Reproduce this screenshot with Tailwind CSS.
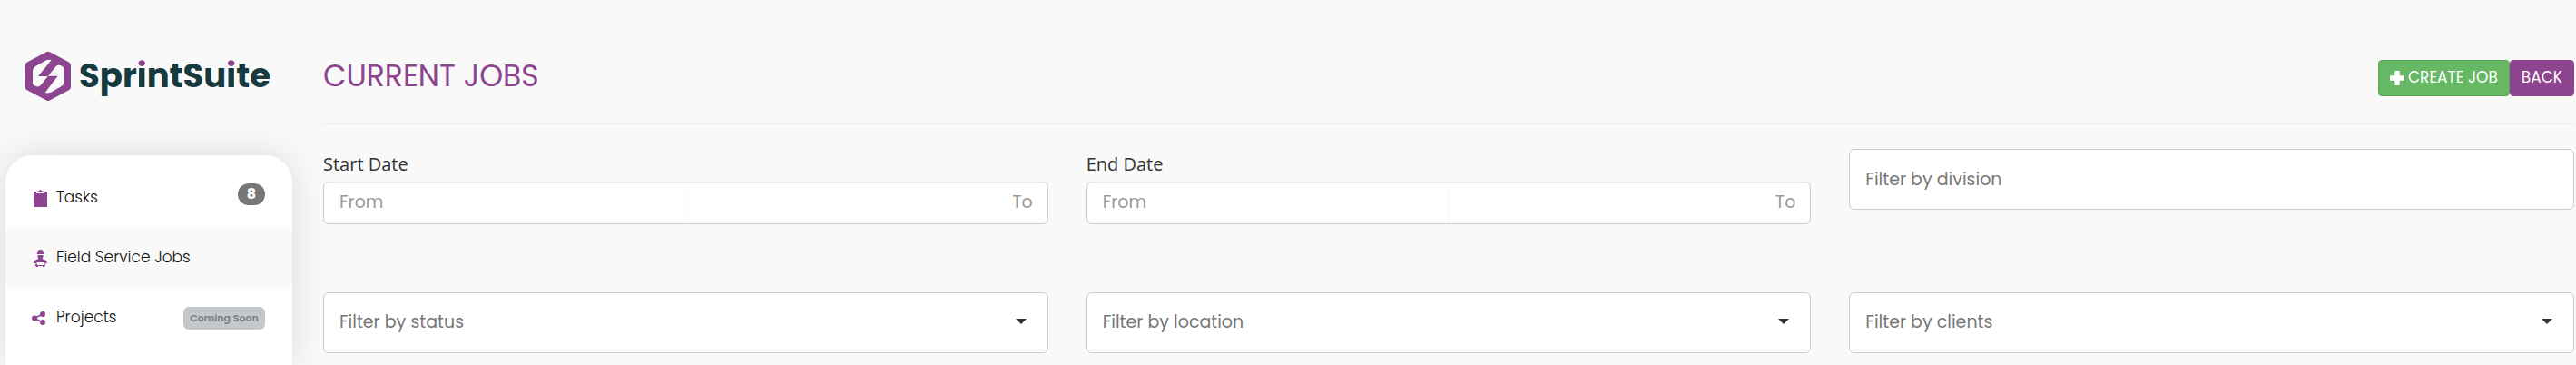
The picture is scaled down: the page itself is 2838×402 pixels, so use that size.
<!DOCTYPE html>
<html lang="en">

<head>
  <meta charset="UTF-8" />
  <meta name="viewport" content="width=device-width, initial-scale=1.0" />
  <title>SprintSuite - Current Jobs</title>
  <script src="https://cdn.jsdelivr.net/npm/@tailwindcss/browser@4"></script>
</head>

<body class="bg-[#f9f9f9] font-['Poppins','Inter',sans-serif] text-[#333] overflow-x-hidden">
  <div class="flex min-h-screen">

    <!-- Sidebar -->
    <aside class="w-[322px] shrink-0 pl-1.5 flex flex-col">
      <a href="#" class="flex items-center gap-2 h-[171px] pl-[21px] pb-1" aria-label="SprintSuite">
        <svg class="w-[52px] h-[56px] shrink-0" viewBox="20 18 156 168">
          <path d="M98 32L161 66V137L98 171L34 137V66Z" fill="#8e4590" stroke="#8e4590" stroke-width="24" stroke-linejoin="round" />
          <path d="M47 84Q47 75 55 70L88 51Q98 45 109 48L65 102H97L74 131Q68 138 60 136Q47 132 47 124Z" fill="#f9f9f9" />
          <path d="M98 101L122 71Q129 63 138 66Q150 70 150 80V122Q150 130 142 135L110 154Q100 159 88 156L130 101Z" fill="#f9f9f9" />
        </svg>
        <span class="text-[37px] leading-none font-bold text-[#173a40]">Spr<span class="bg-[linear-gradient(#8e4590_32%,#173a40_32%)] bg-clip-text text-transparent">i</span>ntSu<span class="bg-[linear-gradient(#8e4590_32%,#173a40_32%)] bg-clip-text text-transparent">i</span>te</span>
      </a>

      <nav class="grow bg-white rounded-t-[30px] pt-3.5 text-[17px] font-light text-[#111] shadow-[0_0_40px_rgba(0,0,0,0.12)]">
        <a href="#" class="flex items-center h-[66px] pl-[31px] pr-[30px]">
          <svg class="w-[15px] h-[19px] mr-2.5" viewBox="0 0 15 19" fill="#8e4590">
            <path d="M0 2H3V4H12V2H15V19H0Z" />
            <path d="M4 3V1.500H6L7 0H8L9 1.500H11V3Z" />
          </svg>
          Tasks
          <span class="ml-auto mb-2 w-[30px] h-6 rounded-full bg-[#777] text-white font-bold text-[16px] leading-6 text-center">8</span>
        </a>
        <a href="#" class="flex items-center h-[66px] pl-[31px] pr-[30px] bg-[#f9f9f9]">
          <svg class="w-[15px] h-[19px] mr-2.5" viewBox="0 0 15 19" fill="#8e4590">
            <path d="M4 4Q4 0 7.500 0T11 4L11.500 5H3.500Z" />
            <path d="M4.500 6H10.500V8L9.500 10L14 12L15 15H12L11 14H4L3 15H0L1 12L5.500 10L4.500 8Z" />
            <path d="M2 15.500H4V17H11V15.500H13V17L12 19H10V18H5V19H3L2 17Z" />
          </svg>
          Field Service Jobs
        </a>
        <a href="#" class="flex items-center h-[66px] pl-[29px] pr-[30px]">
          <svg class="w-[15px] h-[15px] mr-3" viewBox="0 0 15 15" fill="#8e4590">
            <circle cx="3" cy="7.500" r="3" />
            <circle cx="12" cy="3" r="3" />
            <circle cx="12" cy="12" r="3" />
            <path d="M12 3L3 7.500L12 12" fill="none" stroke="#8e4590" stroke-width="1.600" />
          </svg>
          Projects
          <span class="ml-auto w-[90px] h-[25px] rounded-md bg-[#c5c8ca] text-[#777e80] font-semibold text-[11px] leading-[25px] text-center">Coming Soon</span>
        </a>
      </nav>
    </aside>

    <!-- Main content -->
    <main class="grow min-w-0 pl-[34px] pr-0.5">
      <header class="flex items-center justify-between h-[137px] pt-[35px] border-b border-[#eee]">
        <h1 class="text-[33px] text-[#8e4590] -mt-1">CURRENT JOBS</h1>
        <div class="flex text-[17px] text-white">
          <button class="flex items-center gap-1 h-10 px-3 rounded bg-[#66b865] border border-[#57ab57]">
            <svg class="w-4 h-4" viewBox="0 0 18 18" fill="currentColor"><path d="M6 0H12V6H18V12H12V18H6V12H0V6H6Z" /></svg>
            CREATE JOB
          </button>
          <button class="h-10 px-3 rounded bg-[#8e4590] border border-[#8e4590]">BACK</button>
        </div>
      </header>

      <!-- Filters -->
      <form class="grid grid-cols-3 gap-x-[42px] gap-y-[75px] pt-[27px] text-[19px]">
        <div class="h-[83px] flex flex-col justify-end">
          <label for="startFrom" class="font-['Open_Sans'] text-[20px] leading-6 mb-[7px]">Start Date</label>
          <div class="flex h-[47px] rounded-md border border-[#ccc] bg-white overflow-hidden">
            <input id="startFrom" type="text" placeholder="From" class="w-1/2 min-w-0 px-[17px] border-r border-[#f9f9f9] placeholder:text-[#999] shadow-[inset_0_1px_1px_rgba(0,0,0,0.075)]" />
            <input type="text" aria-label="Start date to" placeholder="To" class="w-1/2 min-w-0 px-4 text-right placeholder:text-[#999] shadow-[inset_0_1px_1px_rgba(0,0,0,0.075)]" />
          </div>
        </div>
        <div class="h-[83px] flex flex-col justify-end">
          <label for="endFrom" class="font-['Open_Sans'] text-[20px] leading-6 mb-[7px]">End Date</label>
          <div class="flex h-[47px] rounded-md border border-[#ccc] bg-white overflow-hidden">
            <input id="endFrom" type="text" placeholder="From" class="w-1/2 min-w-0 px-[17px] border-r border-[#f9f9f9] placeholder:text-[#999] shadow-[inset_0_1px_1px_rgba(0,0,0,0.075)]" />
            <input type="text" aria-label="End date to" placeholder="To" class="w-1/2 min-w-0 px-4 text-right placeholder:text-[#999] shadow-[inset_0_1px_1px_rgba(0,0,0,0.075)]" />
          </div>
        </div>
        <input type="text" aria-label="Filter by division" placeholder="Filter by division" class="w-full h-[67px] px-[17px] rounded-md border border-[#ccc] bg-white placeholder:text-[#777]" />

        <div class="relative">
          <select aria-label="Filter by status" class="appearance-none w-full h-[67px] px-[17px] rounded-md border border-[#ccc] bg-white text-[#777]">
            <option>Filter by status</option>
          </select>
          <svg class="absolute right-6 top-[29px] w-3 h-1.5 pointer-events-none" viewBox="0 0 12 6" fill="#333"><path d="M0 0H12L6 6Z" /></svg>
        </div>
        <div class="relative">
          <select aria-label="Filter by location" class="appearance-none w-full h-[67px] px-[17px] rounded-md border border-[#ccc] bg-white text-[#777]">
            <option>Filter by location</option>
          </select>
          <svg class="absolute right-6 top-[29px] w-3 h-1.5 pointer-events-none" viewBox="0 0 12 6" fill="#333"><path d="M0 0H12L6 6Z" /></svg>
        </div>
        <div class="relative">
          <select aria-label="Filter by clients" class="appearance-none w-full h-[67px] px-[17px] rounded-md border border-[#ccc] bg-white text-[#777]">
            <option>Filter by clients</option>
          </select>
          <svg class="absolute right-6 top-[29px] w-3 h-1.5 pointer-events-none" viewBox="0 0 12 6" fill="#333"><path d="M0 0H12L6 6Z" /></svg>
        </div>
      </form>
    </main>

  </div>
</body>

</html>
